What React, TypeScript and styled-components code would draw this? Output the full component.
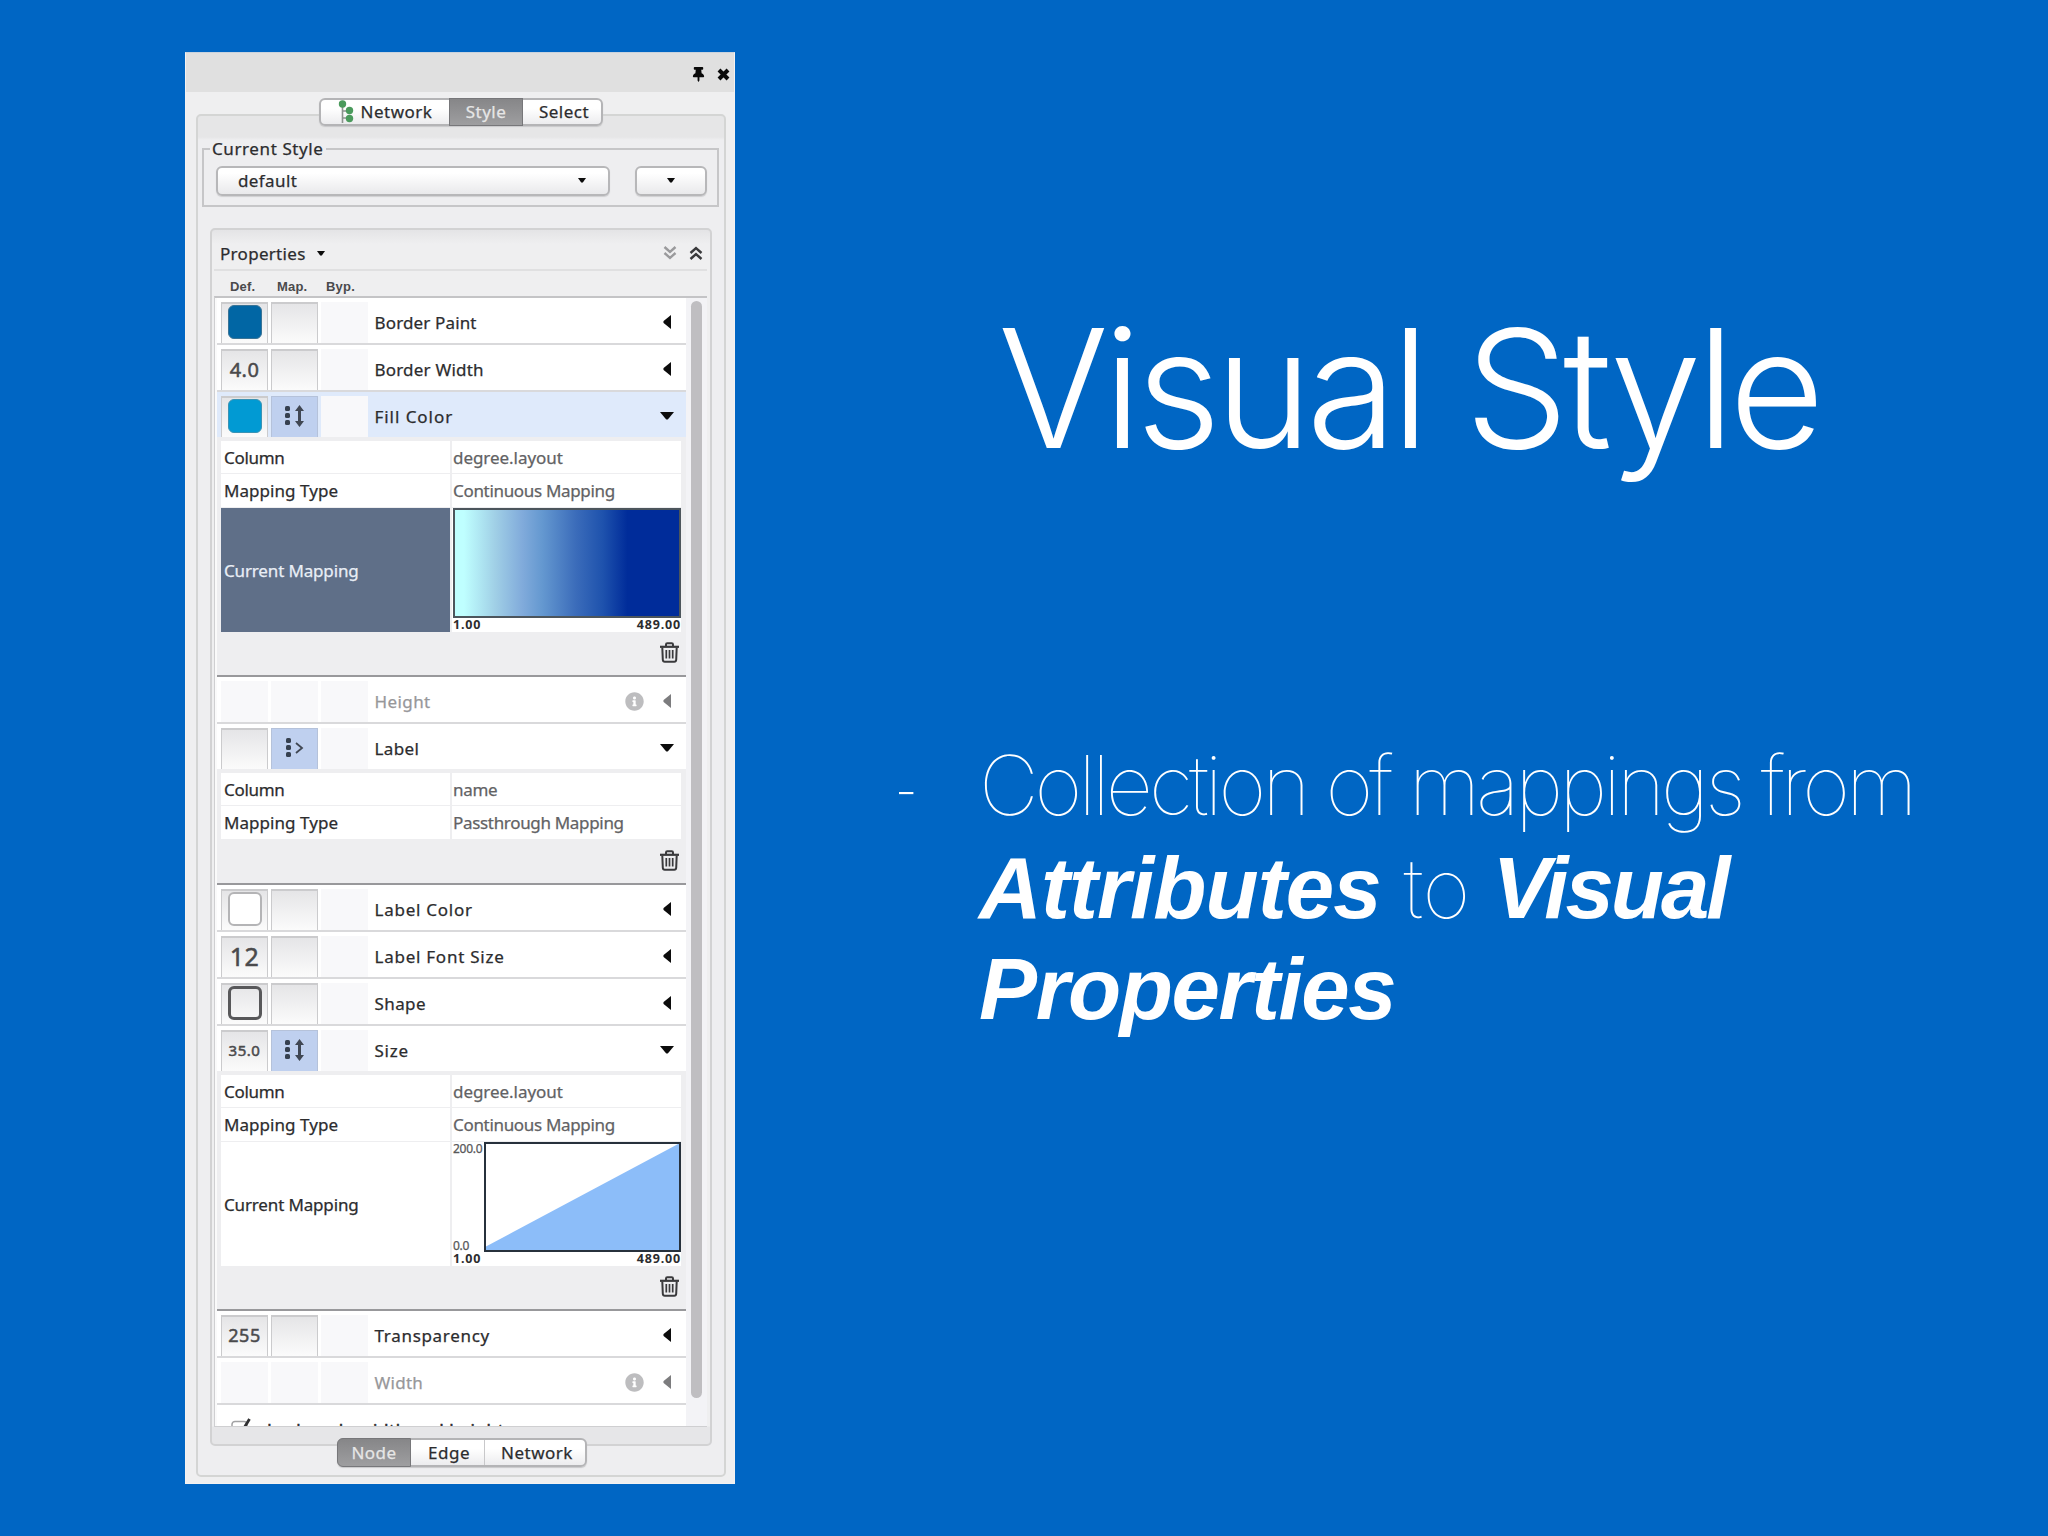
import React from "react";
import styled, { createGlobalStyle, css } from "styled-components";
import { FaThumbtack, FaInfoCircle } from "react-icons/fa";

const ui = `"Noto Sans", "Open Sans", "Liberation Sans", sans-serif`;
const display = `Inter, "Liberation Sans", sans-serif`;

const GlobalStyle = createGlobalStyle`
  * { box-sizing: border-box; }
  body { margin: 0; background: #0066c4; }
`;

const Slide = styled.main`
  display: flex;
  width: 2048px;
  height: 1536px;
  padding: 52px 0 0 185px;
  overflow: hidden;
  background: #0066c4;
`;

/* ---------- slide copy ---------- */

const Copy = styled.section`
  display: flex;
  flex-direction: column;
  flex: 1;
  padding: 234px 0 0 159px;
  color: #fff;
  font-family: ${display};
`;

const Title = styled.h1`
  margin: 0 0 0 104px;
  font-size: 164.5px;
  font-weight: 270;
  font-optical-sizing: none;
  line-height: 205px;
  letter-spacing: -5.6px;
  white-space: nowrap;
`;

const Bullet = styled.div`
  display: flex;
  margin-top: 244px;
`;

const Dash = styled.span`
  width: 85px;
  padding-left: 1px;
  font-size: 50px;
  font-weight: 200;
  line-height: 112px;
`;

const Lines = styled.div`
  display: flex;
  flex-direction: column;
`;

const Line = styled.div<{ $spacing: number }>`
  height: 101.5px;
  line-height: 101.5px;
  font-size: 82.5px;
  font-weight: 100;
  letter-spacing: ${(p) => p.$spacing}px;
  white-space: nowrap;
`;

const Strong = styled.strong<{ $spacing: number }>`
  font-family: "Liberation Sans", Arial, sans-serif;
  font-size: 87px;
  font-weight: 700;
  font-style: italic;
  letter-spacing: ${(p) => p.$spacing}px;
`;

/* ---------- panel shell ---------- */

const Panel = styled.aside`
  display: flex;
  flex-direction: column;
  width: 550px;
  height: 1432px;
  border: 1px solid #f4f2f2;
  border-top-color: #c9d3de;
  background: #efeff0;
  color: #2c2c2e;
  font-family: ${ui};
  font-size: 17px;
  letter-spacing: 0.3px;
  -webkit-text-stroke: 0.25px currentColor;
`;

const TitleBar = styled.header`
  display: flex;
  justify-content: flex-end;
  align-items: center;
  gap: 11px;
  height: 39px;
  padding: 3px 4px 0 0;
  background: #e0e0e0;
  color: #0a0a0a;
`;

const Segments = styled.div<{ $bottom?: boolean }>`
  position: relative;
  z-index: 1;
  display: flex;
  align-self: flex-start;
  height: ${(p) => (p.$bottom ? 29 : 28)}px;
  margin: ${(p) => (p.$bottom ? "-8px 0 0 135px" : "6px 0 -12px 133px")};
  border: 2px solid #b4b4b6;
  border-radius: 6px;
  background: linear-gradient(#fff 35%, #ececee);
  box-shadow: 0 1px 1px #c8c8ca;
`;

const Segment = styled.button<{ $width: number; $active?: boolean; $divider?: boolean; $edge?: boolean; $pad?: number; $gap?: number }>`
  display: flex;
  align-items: center;
  justify-content: center;
  gap: 7px;
  width: ${(p) => p.$width}px;
  padding: 0 0 1px ${(p) => p.$pad ?? 0}px;
  border: 0;
  background: transparent;
  color: #2c2c2e;
  font: inherit;
  letter-spacing: 0.5px;
  ${(p) => p.$divider && css`border-right: 1px solid #c8c8ca;`}
  ${(p) =>
    p.$active &&
    css`
      margin: -2px 0 -2px ${p.$edge ? "-2px" : 0};
      padding-bottom: 1px;
      border: 1px solid #77777a;
      border-radius: ${p.$edge ? "6px 0 0 6px" : 0};
      background: linear-gradient(#868688, #9e9ea0);
      color: #e6e6e6;
    `}
`;

const Group = styled.div`
  display: flex;
  flex-direction: column;
  width: 530px;
  height: 1363px;
  margin-left: 10px;
  padding: 21px 5px 0 4px;
  border: 2px solid #d4d5d4;
  border-radius: 5px;
  background: linear-gradient(#e6e6e7 0 21px, #eeeef0 24px);
`;

const StyleBox = styled.fieldset`
  display: flex;
  align-items: flex-start;
  gap: 25px;
  height: 70px;
  margin: 0;
  min-width: 0;
  padding: 5px 0 0 12px;
  border: 2px solid #c6c6c8;
`;

const Legend = styled.legend`
  margin-left: -6px;
  padding: 0 2px 0 2px;
  line-height: 24px;
  letter-spacing: 0.6px;
`;

const Combo = styled.button<{ $width: number; $inset: number }>`
  display: flex;
  align-items: center;
  justify-content: space-between;
  width: ${(p) => p.$width}px;
  height: 30px;
  padding: 0 ${(p) => p.$inset}px 2px 20px;
  border: 2px solid #b7b7b9;
  border-radius: 6px;
  background: linear-gradient(#fff 20%, #e9e9eb);
  box-shadow: 0 1px 1px #cfcfd1;
  color: #2c2c2e;
  font: inherit;
  letter-spacing: 0.4px;
`;

const Properties = styled.section`
  display: flex;
  flex-direction: column;
  width: 502px;
  height: 1218px;
  margin: 21px 0 0 8px;
  padding: 0 3px 0 2px;
  border: 2px solid #d2d2d3;
  border-radius: 5px;
  background: linear-gradient(#e4e4e6, #efeff0 14px, #efeff0 1196px, #e6e6e8 1197px);
`;

const Toolbar = styled.div`
  display: flex;
  align-items: center;
  height: 41px;
  padding: 7px 4px 0 6px;
  border-bottom: 2px solid #e0e0e1;
`;

const MenuLabel = styled.span`
  display: flex;
  flex: 1;
  align-items: center;
  gap: 11px;
`;

const Expanders = styled.span`
  display: flex;
  gap: 12px;
`;

const Heads = styled.div`
  display: grid;
  grid-template-columns: 47px 49px 50px;
  height: 25px;
  padding: 7px 0 0 16px;
  font: bold 13px/18px "Liberation Sans", Arial, sans-serif;
  letter-spacing: 0.2px;
  -webkit-text-stroke: 0;
  color: #4a4a4c;
`;

const ListFrame = styled.div`
  display: flex;
  height: 1131px;
  border: 1px solid #cfcfd1;
  border-top: 2px solid #c4c4c6;
  border-right: 0;
  background: #fafafa;
`;

const List = styled.div`
  width: 471px;
  height: 100%;
  padding-left: 2px;
  overflow: hidden;
`;

const Track = styled.div`
  flex: 1;
  padding: 3px 0 0 5px;
  background: #f3f3f6;
`;

const Thumb = styled.div`
  width: 11px;
  height: 1097px;
  border-radius: 6px;
  background: #bfbec1;
`;

/* ---------- property rows ---------- */

const Row = styled.div<{ $open?: boolean; $selected?: boolean; $muted?: boolean }>`
  display: flex;
  height: ${(p) => (p.$open ? 45 : 47)}px;
  padding: 4px 12px 0 4px;
  border-bottom: ${(p) => (p.$open ? 0 : "2px solid #d9d9db")};
  background: ${(p) => (p.$selected ? "#dfeafb" : "#fff")};
  color: ${(p) => (p.$muted ? "#97979a" : "#2c2c2e")};
`;

const Slot = styled.div<{ $kind: "plain" | "mapped" | "empty"; $font?: number }>`
  display: flex;
  align-items: center;
  justify-content: center;
  width: 47px;
  margin-right: 3px;
  padding-bottom: 3px;
  font-size: ${(p) => p.$font ?? 17}px;
  color: #4a4a4c;
  letter-spacing: 0.5px;
  -webkit-text-stroke: 0.5px currentColor;
  ${(p) =>
    p.$kind === "plain" &&
    css`
      border: 1px solid #cbcbcd;
      border-width: 2px 1px 0;
      background: linear-gradient(#e5e5e7, #fbfbfb);
    `}
  ${(p) =>
    p.$kind === "mapped" &&
    css`
      padding-right: 2px;
      border: 1px solid #b5c2da;
      border-bottom: 0;
      background: #bfd0ef;
    `}
  ${(p) => p.$kind === "empty" && css`background: #f8f8fa;`}
`;

const Swatch = styled.span<{ $fill: string; $edge: string; $line: number }>`
  width: 34px;
  height: 34px;
  border: ${(p) => p.$line}px solid ${(p) => p.$edge};
  border-radius: 6px;
  background: ${(p) => p.$fill};
`;

const Name = styled.span<{ $spacing: number }>`
  flex: 1;
  padding-left: 3.5px;
  line-height: 41px;
  letter-spacing: ${(p) => p.$spacing}px;
`;

const Marks = styled.span`
  display: flex;
  align-items: center;
  gap: 19px;
  height: 40px;
`;

const Details = styled.div<{ $height: number }>`
  display: flex;
  flex-direction: column;
  height: ${(p) => p.$height}px;
  padding: 4px 5px 0 4px;
  border-bottom: 2px solid #98989b;
  background: #eeeef0;
`;

const Pair = styled.div<{ $height?: number }>`
  display: grid;
  grid-template-columns: 229px 229px;
  gap: 2px;
  height: ${(p) => p.$height ?? 33}px;
  padding-bottom: 1px;
`;

const Cell = styled.div<{ $value?: boolean; $selected?: boolean; $spacing: number }>`
  display: flex;
  align-items: center;
  padding: 0 0 0 ${(p) => (p.$value ? 1 : 3)}px;
  background: ${(p) => (p.$selected ? "#5f6f88" : "#fff")};
  color: ${(p) => (p.$selected ? "#e9eef6" : p.$value ? "#626264" : "#2c2c2e")};
  letter-spacing: ${(p) => p.$spacing}px;
`;

const Graph = styled.div`
  display: flex;
  flex-direction: column;
  background: #fff;
  padding-left: 1px;
`;

const Ramp = styled.div`
  height: 110px;
  border: 2px solid #4c555c;
  background: linear-gradient(90deg, #bfffff 0, #bfffff 4%, #a0cfe6 18%, #81abdb 30%, #6498d0 39%, #3b6cba 54%, #1e52ad 66%, #002c9a 77%, #002c9a 100%);
`;

const Plot = styled.div`
  display: flex;
  justify-content: space-between;
  height: 110px;
`;

const AxisY = styled.div`
  display: flex;
  flex-direction: column;
  justify-content: space-between;
  font-size: 12px;
  line-height: 13px;
  letter-spacing: -0.25px;
  color: #58585a;
`;

const AxisX = styled.div`
  display: flex;
  justify-content: space-between;
  font-size: 12.5px;
  font-weight: 700;
  line-height: 14px;
  letter-spacing: 0.85px;
  -webkit-text-stroke: 0;
`;

const Actions = styled.div`
  display: flex;
  flex: 1;
  align-items: flex-end;
  justify-content: flex-end;
  padding: 0 2px 12px 0;
`;

const LockRow = styled.label`
  display: flex;
  height: 60px;
  padding: 9px 0 0 14px;
  background: #fff;
  gap: 16px;
  letter-spacing: 0.6px;
  line-height: 31px;
  -webkit-text-stroke: 0.5px currentColor;

  svg { margin-top: 3px; }
`;

/* ---------- drawings ---------- */

const Caret = ({ dir, muted, small }: { dir: "left" | "down"; muted?: boolean; small?: boolean }) => {
  const fill = muted ? "#7c7c7e" : "#0c0c0c";
  if (small)
    return (
      <svg width="8" height="5" viewBox="0 0 8 5"><path d="M0 0h8L5 4.300q-1 .8-2 0z" fill={fill} /></svg>
    );
  return dir === "left" ? (
    <svg width="11" height="14" viewBox="0 0 11 14"><path d="M8 0v14L.6 8Q0 7 .6 6z" fill={fill} /></svg>
  ) : (
    <svg width="14" height="8" viewBox="0 0 14 8"><path d="M0 0h14L8 7.2q-1 .8-2 0z" fill={fill} /></svg>
  );
};

const Close = () => (
  <svg width="13" height="13" viewBox="0 0 13 13"><path d="M2 2l9 9M11 2l-9 9" stroke="#0a0a0a" strokeWidth="4" /></svg>
);

const Chevrons = ({ up }: { up?: boolean }) => (
  <svg width="14" height="14" viewBox="0 0 14 14" fill="none" stroke={up ? "#3a3a3c" : "#9a9a9c"} strokeWidth="2.400">
    <path d={up ? "M1.500 7L7 2l5.500 5M1.500 13L7 8l5.500 5" : "M1.500 1L7 6l5.500-5M1.500 7L7 12l5.500-5"} />
  </svg>
);

const Tree = () => (
  <svg width="16" height="24" viewBox="0 0 16 24">
    <path d="M4.500 5v18M4.500 11h6M4.500 18h6" stroke="#8c938e" strokeWidth="1.600" fill="none" />
    <g fill="#4a9a5c">
      <circle cx="4.500" cy="4" r="3.700" />
      <circle cx="11.500" cy="10.500" r="3.700" />
      <circle cx="11.500" cy="18.500" r="3.700" />
    </g>
  </svg>
);

const Trash = () => (
  <svg width="19" height="21" viewBox="0 0 19 21" fill="none" stroke="#3a3a3c" strokeWidth="2">
    <path d="M0 4.800h19" strokeWidth="2.200" />
    <path d="M6 4V2.500Q6 1.200 7.300 1.200h4.400Q13 1.200 13 2.500V4" />
    <path d="M2.300 5.500l.5 12.300q.1 2 2 2h9.400q1.900 0 2-2l.5-12.300" />
    <path d="M6.300 8v8.500M9.500 8v8.500M12.700 8v8.500" strokeWidth="1.700" />
  </svg>
);

const Dots = ({ x }: { x: number }) => (
  <g fill="#36404f">
    <rect x={x} y="1" width="5" height="5" rx="1.600" />
    <rect x={x} y="8" width="5" height="5" rx="1.600" />
    <rect x={x} y="15" width="5" height="5" rx="1.600" />
  </g>
);

const Continuous = () => (
  <svg width="22" height="22" viewBox="0 0 22 22">
    <Dots x={2} />
    <path d="M16.500 4v14" stroke="#404753" strokeWidth="3" />
    <path d="M12 6l4.500-6 4.500 6zM12 16l4.500 6 4.500-6z" fill="#404753" />
  </svg>
);

const Passthrough = () => (
  <svg width="22" height="22" viewBox="0 0 22 22">
    <Dots x={3} />
    <path d="M13 6l6 5-6 5" stroke="#404753" strokeWidth="1.800" fill="none" />
  </svg>
);

const CheckBox = () => (
  <svg width="20" height="20" viewBox="0 0 20 20" fill="none">
    <rect x="1" y="4.500" width="15" height="15" rx="3" stroke="#a2a2a4" strokeWidth="1.500" />
    <path d="M6 12l4 4L18.500 2" stroke="#303032" strokeWidth="2.800" />
  </svg>
);

const Slope = () => (
  <svg width="197" height="110" viewBox="0 0 197 110">
    <rect width="197" height="110" fill="#fff" />
    <path d="M1 105L196 1v108H1z" fill="#8cbdf9" />
    <rect x="1" y="1" width="195" height="108" fill="none" stroke="#27313c" strokeWidth="2" />
  </svg>
);

/* ---------- composition ---------- */

type PropertyProps = {
  name: string;
  spacing: number;
  def?: React.ReactNode;
  font?: number;
  mapping?: React.ReactNode;
  open?: boolean;
  selected?: boolean;
  muted?: boolean;
};

const Property = ({ name, spacing, def, font, mapping, open, selected, muted }: PropertyProps) => (
  <Row $open={open} $selected={selected} $muted={muted}>
    <Slot $kind={muted ? "empty" : "plain"} $font={font}>{def}</Slot>
    <Slot $kind={muted ? "empty" : mapping ? "mapped" : "plain"}>{mapping}</Slot>
    <Slot $kind="empty" />
    <Name $spacing={spacing}>{name}</Name>
    <Marks>
      {muted && <FaInfoCircle size={19} color="#bdbdbf" />}
      <Caret dir={open ? "down" : "left"} muted={muted} />
    </Marks>
  </Row>
);

type MappingProps = {
  height: number;
  column: string;
  columnSpacing: number;
  type: string;
  graph?: React.ReactNode;
  selected?: boolean;
};

const Mapping = ({ height, column, columnSpacing, type, graph, selected }: MappingProps) => (
  <Details $height={height}>
    <Pair>
      <Cell $spacing={-0.3}>Column</Cell>
      <Cell $value $spacing={columnSpacing}>{column}</Cell>
    </Pair>
    <Pair $height={34}>
      <Cell $spacing={0.05}>Mapping Type</Cell>
      <Cell $value $spacing={-0.32}>{type}</Cell>
    </Pair>
    {graph && (
      <Pair $height={123}>
        <Cell $selected={selected} $spacing={-0.15}>Current Mapping</Cell>
        <Graph>
          {graph}
          <AxisX><span>1.00</span><span>489.00</span></AxisX>
        </Graph>
      </Pair>
    )}
    <Actions><Trash /></Actions>
  </Details>
);

export default function App() {
  return (
    <Slide>
      <GlobalStyle />
      <Panel>
        <TitleBar>
          <FaThumbtack size={15} />
          <Close />
        </TitleBar>
        <Segments>
          <Segment $width={128}><Tree />Network</Segment>
          <Segment $width={74} $active>Style</Segment>
          <Segment $width={78} $pad={4}>Select</Segment>
        </Segments>
        <Group>
          <StyleBox>
            <Legend>Current Style</Legend>
            <Combo $width={394} $inset={22}>default<Caret dir="down" small /></Combo>
            <Combo $width={72} $inset={30}><span /><Caret dir="down" small /></Combo>
          </StyleBox>
          <Properties>
            <Toolbar>
              <MenuLabel>Properties<Caret dir="down" small /></MenuLabel>
              <Expanders><Chevrons /><Chevrons up /></Expanders>
            </Toolbar>
            <Heads><span>Def.</span><span>Map.</span><span>Byp.</span></Heads>
            <ListFrame>
              <List>
                <Property name="Border Paint" spacing={0.15} def={<Swatch $fill="#0166a4" $edge="#3a7496" $line={1} />} />
                <Property name="Border Width" spacing={0.2} def="4.0" font={20} />
                <Property name="Fill Color" spacing={0.95} def={<Swatch $fill="#019ad3" $edge="#3a93b5" $line={1} />} mapping={<Continuous />} open selected />
                <Mapping height={240} column="degree.layout" columnSpacing={-0.05} type="Continuous Mapping" graph={<Ramp />} selected />
                <Property name="Height" spacing={0.4} muted />
                <Property name="Label" spacing={0.35} mapping={<Passthrough />} open />
                <Mapping height={116} column="name" columnSpacing={-0.3} type="Passthrough Mapping" />
                <Property name="Label Color" spacing={0.75} def={<Swatch $fill="#fff" $edge="#b4b4b6" $line={2} />} />
                <Property name="Label Font Size" spacing={0.75} def="12" font={25} />
                <Property name="Shape" spacing={0.4} def={<Swatch $fill="transparent" $edge="#58585a" $line={3} />} />
                <Property name="Size" spacing={0.75} def="35.0" font={15} mapping={<Continuous />} open />
                <Mapping
                  height={240}
                  column="degree.layout"
                  columnSpacing={-0.05}
                  type="Continuous Mapping"
                  graph={<Plot><AxisY><span>200.0</span><span>0.0</span></AxisY><Slope /></Plot>}
                />
                <Property name="Transparency" spacing={0.7} def="255" font={18} />
                <Property name="Width" spacing={0.25} muted />
                <LockRow><CheckBox />Lock node width and height</LockRow>
              </List>
              <Track><Thumb /></Track>
            </ListFrame>
          </Properties>
          <Segments $bottom>
            <Segment $width={74} $active $edge>Node</Segment>
            <Segment $width={74} $divider $pad={3}>Edge</Segment>
            <Segment $width={100} $pad={4}>Network</Segment>
          </Segments>
        </Group>
      </Panel>
      <Copy>
        <Title>Visual Style</Title>
        <Bullet>
          <Dash>-</Dash>
          <Lines>
            <Line $spacing={-4.05}>Collection of mappings from</Line>
            <Line $spacing={-0.5}><Strong $spacing={-0.9}>Attributes</Strong> to <Strong $spacing={-3}>Visual</Strong></Line>
            <Line $spacing={-4.05}><Strong $spacing={-1.4}>Properties</Strong></Line>
          </Lines>
        </Bullet>
      </Copy>
    </Slide>
  );
}
